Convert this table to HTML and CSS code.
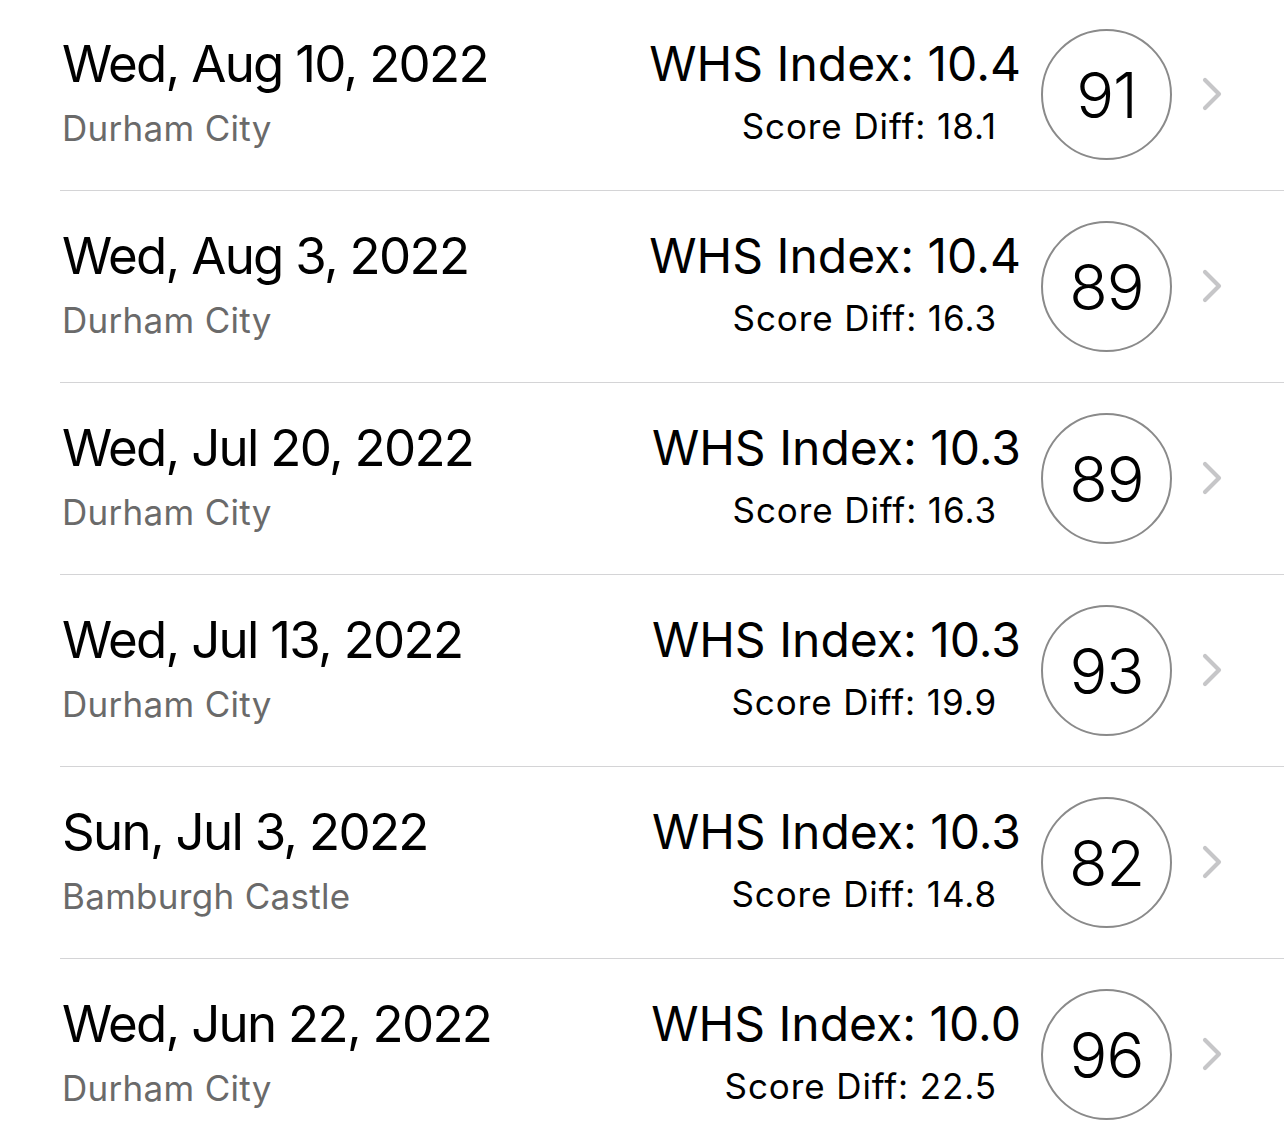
FILE: index.html
```html
<!DOCTYPE html>
<html>
<head>
<meta charset="utf-8">
<link rel="stylesheet" href="styles.css">
</head>
<body>
<ul class="rounds">
  <li class="round">
    <div class="info"><div class="date">Wed, Aug 10, 2022</div><div class="course">Durham City</div></div>
    <div class="stats"><div class="index">WHS Index: 10.4</div><div class="diff">Score Diff: 18.1</div></div>
    <div class="score">91</div>
    <svg class="chev" viewBox="0 0 24 34" width="24" height="34"><path d="M5 3 L19 17 L5 31" fill="none" stroke="#c6c6c8" stroke-width="4.2" stroke-linecap="round" stroke-linejoin="round"/></svg>
  </li>
  <li class="round">
    <div class="info"><div class="date">Wed, Aug 3, 2022</div><div class="course">Durham City</div></div>
    <div class="stats"><div class="index">WHS Index: 10.4</div><div class="diff">Score Diff: 16.3</div></div>
    <div class="score">89</div>
    <svg class="chev" viewBox="0 0 24 34" width="24" height="34"><path d="M5 3 L19 17 L5 31" fill="none" stroke="#c6c6c8" stroke-width="4.2" stroke-linecap="round" stroke-linejoin="round"/></svg>
  </li>
  <li class="round">
    <div class="info"><div class="date">Wed, Jul 20, 2022</div><div class="course">Durham City</div></div>
    <div class="stats"><div class="index">WHS Index: 10.3</div><div class="diff">Score Diff: 16.3</div></div>
    <div class="score">89</div>
    <svg class="chev" viewBox="0 0 24 34" width="24" height="34"><path d="M5 3 L19 17 L5 31" fill="none" stroke="#c6c6c8" stroke-width="4.2" stroke-linecap="round" stroke-linejoin="round"/></svg>
  </li>
  <li class="round">
    <div class="info"><div class="date">Wed, Jul 13, 2022</div><div class="course">Durham City</div></div>
    <div class="stats"><div class="index">WHS Index: 10.3</div><div class="diff">Score Diff: 19.9</div></div>
    <div class="score">93</div>
    <svg class="chev" viewBox="0 0 24 34" width="24" height="34"><path d="M5 3 L19 17 L5 31" fill="none" stroke="#c6c6c8" stroke-width="4.2" stroke-linecap="round" stroke-linejoin="round"/></svg>
  </li>
  <li class="round">
    <div class="info"><div class="date">Sun, Jul 3, 2022</div><div class="course">Bamburgh Castle</div></div>
    <div class="stats"><div class="index">WHS Index: 10.3</div><div class="diff">Score Diff: 14.8</div></div>
    <div class="score">82</div>
    <svg class="chev" viewBox="0 0 24 34" width="24" height="34"><path d="M5 3 L19 17 L5 31" fill="none" stroke="#c6c6c8" stroke-width="4.2" stroke-linecap="round" stroke-linejoin="round"/></svg>
  </li>
  <li class="round">
    <div class="info"><div class="date">Wed, Jun 22, 2022</div><div class="course">Durham City</div></div>
    <div class="stats"><div class="index">WHS Index: 10.0</div><div class="diff">Score Diff: 22.5</div></div>
    <div class="score">96</div>
    <svg class="chev" viewBox="0 0 24 34" width="24" height="34"><path d="M5 3 L19 17 L5 31" fill="none" stroke="#c6c6c8" stroke-width="4.2" stroke-linecap="round" stroke-linejoin="round"/></svg>
  </li>
</ul>
</body>
</html>
```
FILE: styles.css
```css
html, body {
  margin: 0;
  padding: 0;
  background: #ffffff;
  overflow: hidden;
}
body {
  font-family: Inter, "Liberation Sans", sans-serif;
  color: #000;
}
.rounds {
  list-style: none;
  margin: -1px 0 0 60px;
  padding: 0;
}
.round {
  display: flex;
  align-items: flex-start;
  height: 191px;
  border-bottom: 1px solid #d4d4d6;
  padding-left: 2px;
}
.info {
  flex: 1;
  padding-top: 39px;
}
.date {
  font-size: 51px;
  line-height: 52px;
  font-weight: 400;
  letter-spacing: -1.7px;
}
.course {
  font-size: 35px;
  line-height: 34px;
  color: #6a6a6a;
  margin-top: 21px;
  letter-spacing: 0.3px;
}
.stats {
  display: flex;
  flex-direction: column;
  align-items: flex-end;
  padding-top: 41px;
  margin-right: 20px;
}
.index {
  font-size: 48px;
  line-height: 48px;
}
.diff {
  font-size: 35px;
  line-height: 34px;
  margin-top: 21px;
  margin-right: 24px;
  letter-spacing: 0.9px;
}
.score {
  width: 127px;
  height: 127px;
  margin-top: 30px;
  border: 2px solid #8a8a8a;
  border-radius: 50%;
  display: flex;
  align-items: center;
  justify-content: center;
  font-size: 63px;
  font-weight: 300;
  letter-spacing: -1px;
  flex: none;
}
.chev {
  flex: none;
  margin: 78px 60px 0 28px;
}
```
